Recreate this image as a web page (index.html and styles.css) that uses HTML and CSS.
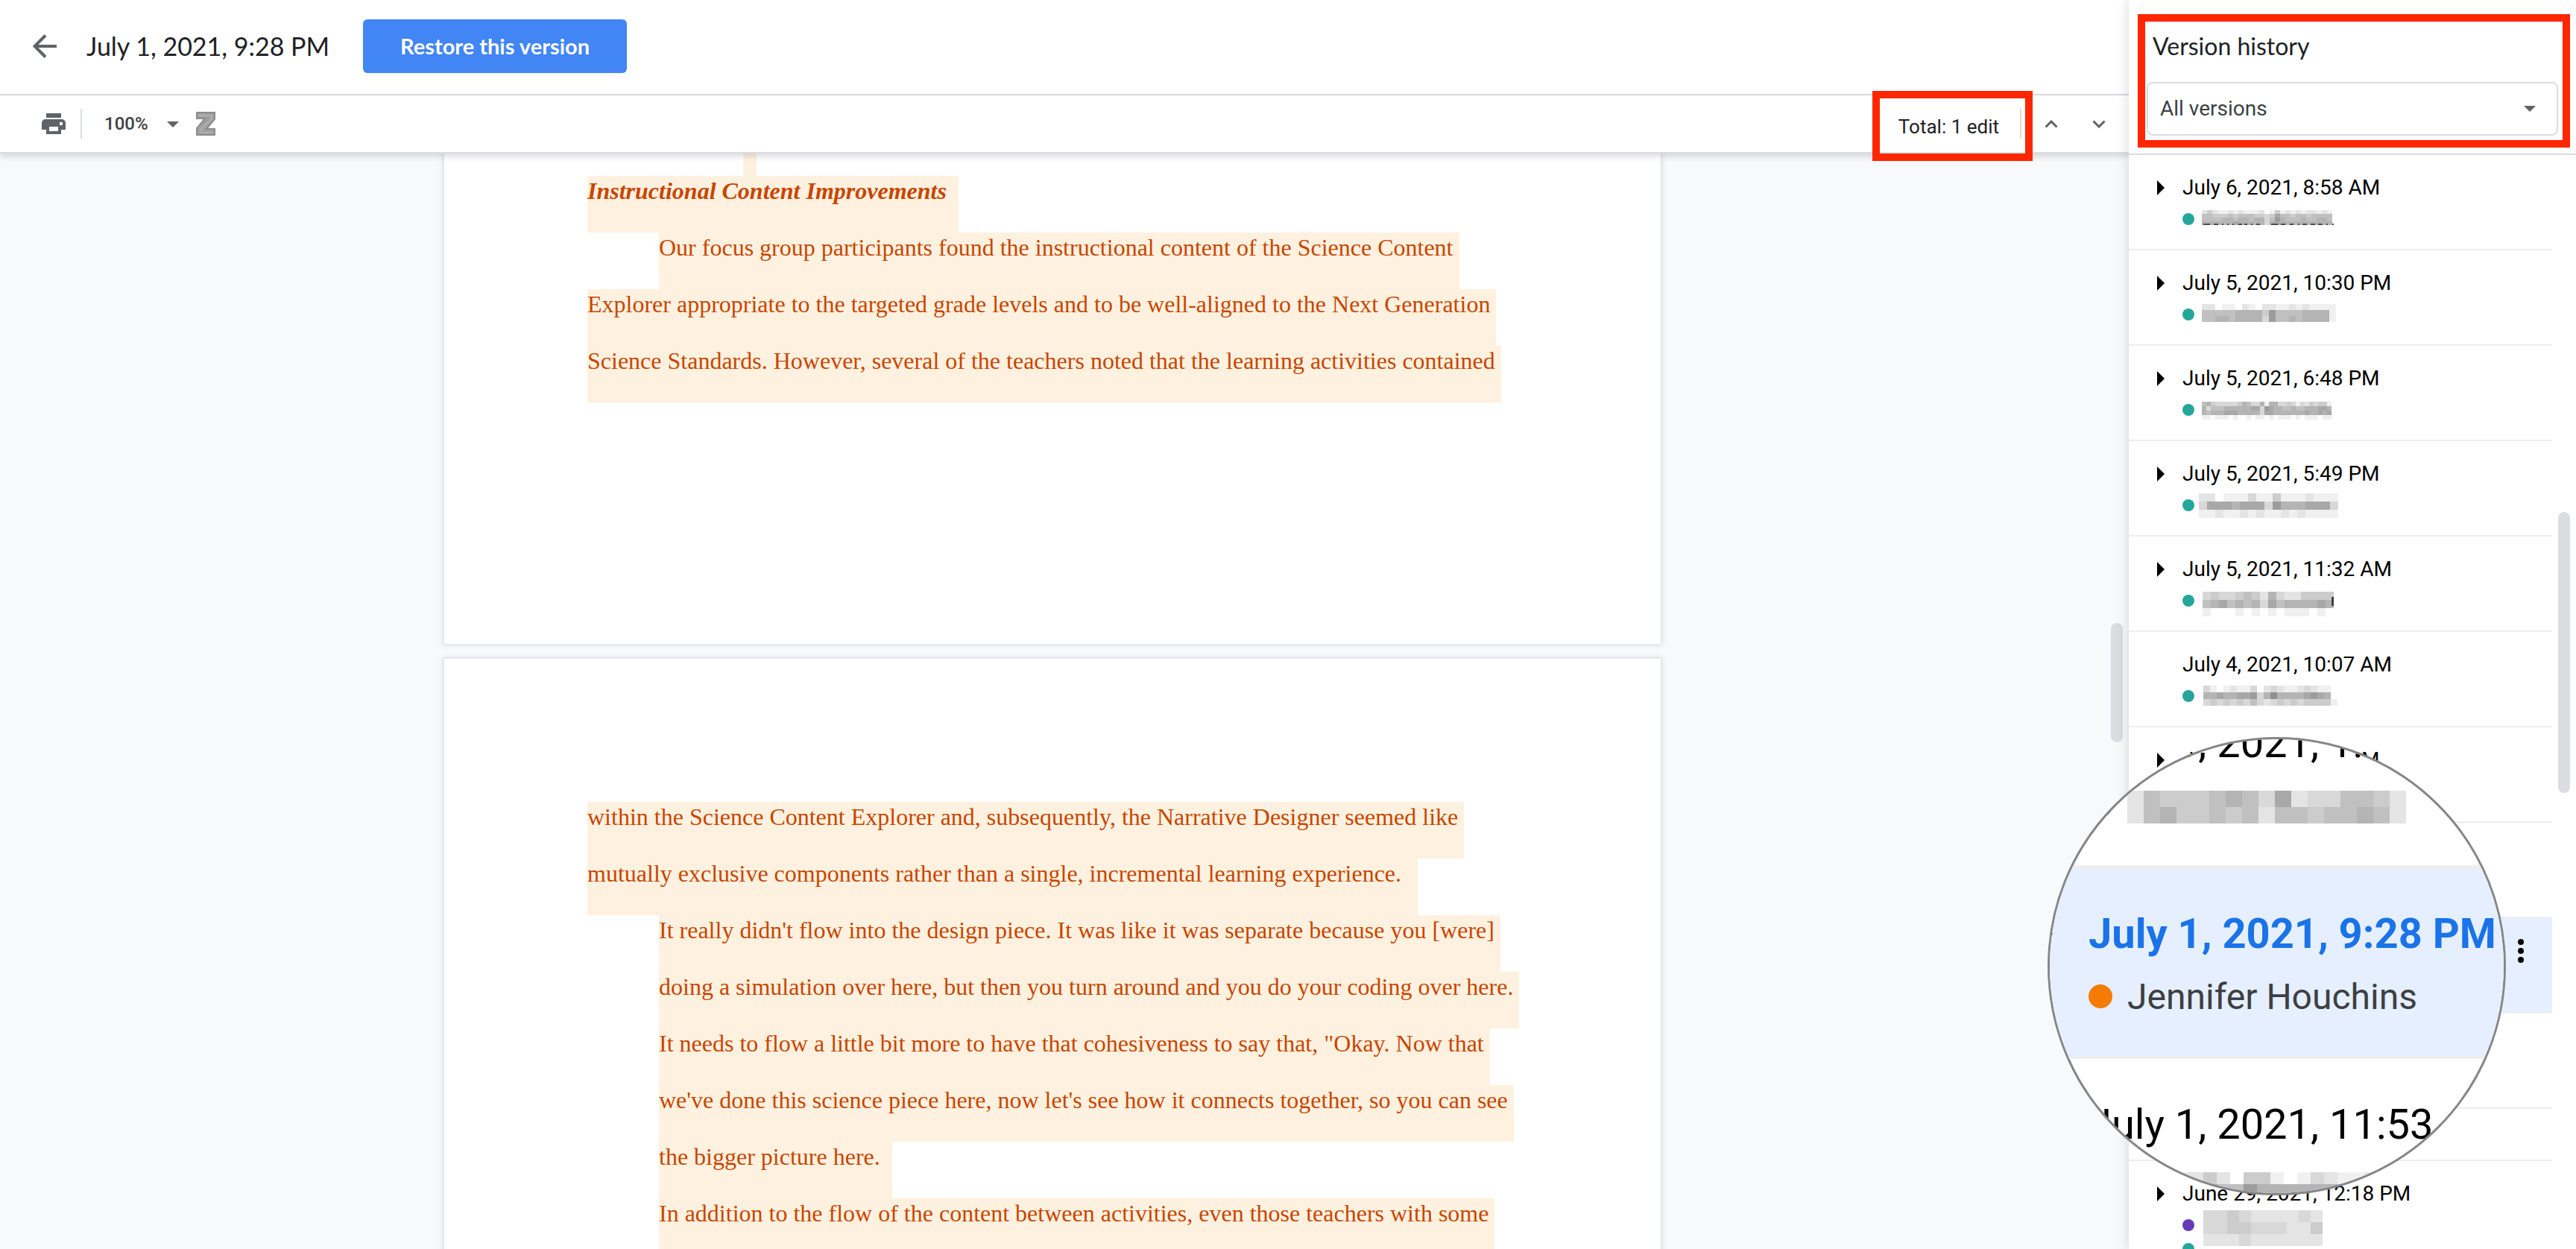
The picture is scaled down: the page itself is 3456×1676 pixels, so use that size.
FILE: index.html
```html
<!DOCTYPE html>
<html lang="en">
<head>
<meta charset="utf-8">
<title>Version history</title>
<link rel="stylesheet" href="styles.css">
</head>
<body>
<div class="app">
  <main class="main">
    <header class="header">
      <button class="icon-button back" aria-label="Back">
        <svg width="32" height="32" viewBox="0 0 32 32"><path d="M17 1.500 2.500 16 17 30.500M2.500 16H32" fill="none" stroke="#5f6368" stroke-width="4"/></svg>
      </button>
      <h1 class="title">July 1, 2021, 9:28 PM</h1>
      <button class="restore">Restore this version</button>
    </header>

    <div class="toolbar">
      <button class="icon-button print" aria-label="Print">
        <svg width="32" height="28" viewBox="0 0 32 28" fill="#5f6368"><path d="M6 0h20v6H6z"/><path fill-rule="evenodd" d="M5 8h22a5 5 0 0 1 5 5v9h-6v6H6v-6H0v-9a5 5 0 0 1 5-5zm5 10v6h12v-6zm14-6v4h4v-4z"/></svg>
      </button>
      <span class="divider"></span>
      <label class="zoom">
        <select class="zoom-select" aria-label="Zoom"><option>100%</option></select>
        <svg class="zoom-caret" width="16" height="8" viewBox="0 0 16 8"><path d="M0 0h16L8 8z" fill="#5f6368"/></svg>
      </label>
      <button class="icon-button addon" aria-label="Zotero">
        <svg width="26" height="32" viewBox="0 0 26 32"><path d="M1 1h24v9L14 23h11v8H1v-9L12 9H1z" fill="#a0a0a0" stroke="#8c8c8c" stroke-width="2"/><path d="M4 5h17v4L6 24v4h16" fill="none" stroke="#b0b0b0" stroke-width="2"/></svg>
      </button>
      <div class="edits">
        <span class="edits-total">Total: 1 edit</span>
        <span class="divider"></span>
      </div>
      <button class="icon-button step" aria-label="Previous edit">
        <svg width="18" height="11" viewBox="0 0 18 11"><path d="M1.500 9.500 9 2l7.500 7.500" fill="none" stroke="#5f6368" stroke-width="3"/></svg>
      </button>
      <button class="icon-button step" aria-label="Next edit">
        <svg width="18" height="11" viewBox="0 0 18 11"><path d="M1.500 1.500 9 9l7.500-7.500" fill="none" stroke="#5f6368" stroke-width="3"/></svg>
      </button>
    </div>

    <div class="viewport">
      <section class="page page-first">
        <div class="line-end"></div>
        <h2 class="line para-end heading">Instructional Content Improvements</h2>
        <div class="line indent">Our focus group participants found the instructional content of the Science Content</div>
        <div class="line">Explorer appropriate to the targeted grade levels and to be well-aligned to the Next Generation</div>
        <div class="line">Science Standards. However, several of the teachers noted that the learning activities contained</div>
      </section>
      <section class="page page-next">
        <div class="line">within the Science Content Explorer and, subsequently, the Narrative Designer seemed like</div>
        <div class="line para-end-space">mutually exclusive components rather than a single, incremental learning experience.</div>
        <div class="line indent">It really didn't flow into the design piece. It was like it was separate because you [were]</div>
        <div class="line indent">doing a simulation over here, but then you turn around and you do your coding over here.</div>
        <div class="line indent">It needs to flow a little bit more to have that cohesiveness to say that, "Okay. Now that</div>
        <div class="line indent">we've done this science piece here, now let's see how it connects together, so you can see</div>
        <div class="line indent para-end">the bigger picture here.</div>
        <div class="line indent">In addition to the flow of the content between activities, even those teachers with some</div>
      </section>
      <span class="thumb thumb-doc"></span>
    </div>
  </main>

  <aside class="sidebar">
    <div class="side-head">
      <h2 class="side-title">Version history</h2>
      <label class="filter">
        <select class="filter-select" aria-label="Filter versions"><option>All versions</option></select>
        <svg class="filter-caret" width="16" height="8" viewBox="0 0 16 8"><path d="M0 0h16L8 8z" fill="#5f6368"/></svg>
      </label>
    </div>
    <div class="versions">
      <ul class="list">
        <li class="row"><div class="date expandable">July 6, 2021, 8:58 AM</div><div class="author"><i class="dot teal"></i><svg class="mosaic" data-name="a"></svg></div></li>
        <li class="row"><div class="date expandable">July 5, 2021, 10:30 PM</div><div class="author"><i class="dot teal"></i><svg class="mosaic" data-name="b"></svg></div></li>
        <li class="row"><div class="date expandable">July 5, 2021, 6:48 PM</div><div class="author"><i class="dot teal"></i><svg class="mosaic" data-name="c"></svg></div></li>
        <li class="row"><div class="date expandable">July 5, 2021, 5:49 PM</div><div class="author"><i class="dot teal"></i><svg class="mosaic" data-name="d"></svg></div></li>
        <li class="row"><div class="date expandable">July 5, 2021, 11:32 AM</div><div class="author"><i class="dot teal"></i><svg class="mosaic" data-name="e"></svg></div></li>
        <li class="row"><div class="date">July 4, 2021, 10:07 AM</div><div class="author"><i class="dot teal"></i><svg class="mosaic" data-name="f"></svg></div></li>
        <li class="row"><div class="date expandable">July 1, 2021, 1:30 PM</div></li>
        <li class="row"></li>
        <li class="row selected">
          <button class="icon-button more" aria-label="More actions">
            <svg width="8" height="32" viewBox="0 0 8 32"><circle cx="4" cy="4" r="4"/><circle cx="4" cy="16" r="4"/><circle cx="4" cy="28" r="4"/></svg>
          </button>
        </li>
        <li class="row"></li>
        <li class="row short"></li>
        <li class="row"><div class="date expandable">June 29, 2021, 12:18 PM</div><div class="author"><i class="dot purple"></i><svg class="mosaic" data-name="g"></svg></div><div class="author"><i class="dot teal"></i></div></li>
      </ul>
      <span class="thumb thumb-side"></span>
    </div>
  </aside>

  <div class="lens">
    <ul class="list lens-list">
      <li class="row"><div class="date expandable">July 1, 2021, 1:30 PM</div><div class="author"><i class="dot teal"></i><svg class="mosaic" data-name="h"></svg></div></li>
      <li class="row selected"><div class="date expandable">July 1, 2021, 9:28 PM</div><div class="author"><i class="dot orange"></i>Jennifer Houchins</div></li>
      <li class="row"><div class="date">July 1, 2021, 11:53 AM</div><div class="author"><svg class="mosaic" data-name="i"></svg></div></li>
    </ul>
  </div>
</div>
<script src="script.js"></script>
</body>
</html>
```
FILE: styles.css
```css
* { box-sizing: border-box; }

body {
  margin: 0;
  font-family: Roboto, "Liberation Sans", sans-serif;
  color: #202124;
  background: #fff;
}

h1, h2, ul { margin: 0; padding: 0; font-weight: 400; }
ul { list-style: none; }

.app {
  position: relative;
  display: grid;
  grid-template-columns: minmax(0, 1fr) 600px;
  height: 100vh;
  overflow: hidden;
}

.icon-button {
  display: flex;
  align-items: center;
  justify-content: center;
  padding: 0;
  border: 0;
  background: none;
}

.main {
  display: flex;
  flex-direction: column;
  min-width: 0;
  min-height: 0;
}

/* header */
.header {
  display: flex;
  align-items: center;
  height: 128px;
  padding: 0 44px 2px;
  border-bottom: 2px solid #dadce0;
}
.title {
  margin: 0 45px 0 40px;
  font: 400 34px/44px Lato, Roboto, sans-serif;
  white-space: nowrap;
}
.restore {
  height: 72px;
  padding: 0 50px;
  border: 0;
  border-radius: 6px;
  background: #4285f4;
  color: #fff;
  font: 700 29px/36px Lato, Roboto, sans-serif;
}

/* toolbar */
.toolbar {
  position: relative;
  z-index: 1;
  display: flex;
  align-items: center;
  height: 78px;
  padding: 0 8px 0 56px;
  border-bottom: 2px solid #dadce0;
  background: #fff;
  box-shadow: 0 4px 8px rgba(0, 0, 0, 0.14);
}
.divider { width: 2px; height: 40px; background: #dadce0; }
.print { margin-right: 20px; }
.zoom { position: relative; width: 100px; margin-left: 30px; }
.zoom-select {
  width: 100%;
  padding: 0;
  border: 0;
  background: none;
  appearance: none;
  color: #3c4043;
  font: 500 24px/32px Roboto, sans-serif;
}
.zoom-caret { position: absolute; right: 0; top: 13px; }
.addon { margin-left: 23px; }
.edits {
  position: relative;
  display: flex;
  align-items: center;
  align-self: stretch;
  gap: 28px;
  margin-left: auto;
  margin-right: 8px;
}
.edits-total { padding-top: 8px; font-size: 26px; line-height: 32px; }
.edits::after {
  content: "";
  position: absolute;
  inset: -6px -15px -12px -35px;
  border: 10px solid #ff2600;
}
.step { width: 64px; height: 64px; }

/* document */
.viewport {
  position: relative;
  flex: 1;
  min-height: 0;
  padding-right: 32px;
  overflow: hidden;
  background: #f8f9fb;
}
.page {
  max-width: 1632px;
  margin: 0 auto 20px;
  padding: 0 192px;
  background: #fff;
  box-shadow: 0 0 6px 2px rgba(60, 64, 67, 0.15);
  color: #c84600;
  font: 32px/40px "Liberation Serif", serif;
}
.page-first { padding-bottom: 324px; }
.page-next { padding-top: 192px; padding-bottom: 192px; }
.line {
  width: fit-content;
  padding: 0 8px 36px 0;
  background: #fff1df;
  white-space: nowrap;
}
.line-end { width: 18px; height: 30px; margin-left: 209px; background: #fff1df; }
.heading { font: italic 700 32px/40px "Liberation Serif", serif; }
.indent { margin-left: 96px; }
.para-end { padding-right: 16px; }
.para-end-space { padding-right: 22px; }

.thumb { position: absolute; right: 8px; width: 16px; border-radius: 8px; background: #dadce0; }
.thumb-doc { top: 630px; height: 160px; }
.thumb-side { top: 479px; height: 377px; }

/* sidebar */
.sidebar {
  position: relative;
  z-index: 2;
  display: flex;
  flex-direction: column;
  min-height: 0;
  background: #fff;
  box-shadow: 0 0 16px rgba(0, 0, 0, 0.16);
}
.side-head {
  position: relative;
  height: 208px;
  padding: 40px 24px 24px;
  border-bottom: 2px solid #dadce0;
}
.side-head::after {
  content: "";
  position: absolute;
  inset: 19px 8px 8px 12px;
  border: 10px solid #ff2600;
  pointer-events: none;
}
.side-title { padding-left: 8px; font: 400 32px/44px Lato, Roboto, sans-serif; }
.filter { position: relative; display: block; margin-top: 26px; }
.filter-select {
  width: 100%;
  height: 72px;
  padding: 0 16px;
  border: 2px solid #dadce0;
  border-radius: 8px;
  background: #fff;
  appearance: none;
  color: #3c4043;
  font: 28px/36px Roboto, sans-serif;
}
.filter-caret { position: absolute; right: 30px; top: 32px; }
.versions { position: relative; flex: 1; min-height: 0; overflow: hidden; }

/* version rows; --s is the magnification */
.list { --s: 1px; padding-right: 32px; }
.row {
  position: relative;
  min-height: calc(128 * var(--s));
  padding: calc(28 * var(--s)) 0 0 calc(72 * var(--s));
  border-bottom: calc(2 * var(--s)) solid #eee;
}
.date {
  position: relative;
  color: #000;
  font-size: calc(28 * var(--s));
  line-height: calc(32 * var(--s));
  margin-bottom: calc(12 * var(--s));
  white-space: nowrap;
}
.expandable::before {
  content: "";
  position: absolute;
  left: calc(-34 * var(--s));
  top: calc(6 * var(--s));
  border-left: calc(10 * var(--s)) solid #000;
  border-top: calc(10 * var(--s)) solid transparent;
  border-bottom: calc(10 * var(--s)) solid transparent;
}
.author {
  display: flex;
  align-items: center;
  gap: calc(10 * var(--s));
  height: calc(28 * var(--s));
  margin-bottom: calc(4 * var(--s));
  color: #3c4043;
  font-size: calc(24 * var(--s));
  white-space: nowrap;
}
.dot { width: calc(16 * var(--s)); height: calc(16 * var(--s)); border-radius: 50%; }
.teal { background: #26a69a; }
.purple { background: #673ab7; }
.orange { background: #f57c00; }
.mosaic { width: 200px; height: 100%; overflow: visible; shape-rendering: crispEdges; }
.selected { background: #e6efff; }
.selected .date { color: #1a73e8; font-weight: 700; }
.short { min-height: 70px; padding: 0; }
.more { width: 32px; height: 32px; margin: 0 26px 0 auto; }

/* magnifying lens laid over the list */
.lens {
  position: absolute;
  z-index: 3;
  right: 94px;
  top: 989px;
  width: 615px;
  height: 615px;
  overflow: hidden;
  border: 3px solid #868686;
  border-radius: 50%;
  background: #fff;
}
.lens-list {
  --s: 2px;
  margin: -83px 0 0 -92px;
  padding: 0;
}
```
FILE: script.js
```js
// Redacted author names: each digit is one cell, 0 = white, 9 = darkest.
const mosaics = {
  a: { x: 0, y: 2, w: 7, h: 5, rows: ["24211212111201412121221210", "55444545554434755455455550", "55556656656635865556556650", "66666676666636766666666660"],
       marks: [[2, 9], [16, 6], [27, 2], [34, 2], [41, 2], [49, 5], [57, 4], [66, 2], [73, 5], [93, 9], [106, 6], [118, 5], [129, 2], [135, 6], [146, 6], [156, 6], [167, 2], [175, 2]] },
  b: { x: 0, y: 0, w: 9, h: 8, rows: ["22011021022112121111", "55555666648555566661", "55665666638556566661"] },
  c: { x: 0, y: 3, w: 6, h: 6, rows: ["564333334653361663343132434410", "635556666667738766556556667760", "656667776666637766666667667670", "110111010010110101110101110110"] },
  d: { x: -4, y: -2, w: 11, h: 11, rows: ["22011131141112111", "37776777386667773", "11211212112121111"] },
  e: { x: 1, y: 2, w: 11, h: 11, rows: ["3433454263224444", "5675656375666676", "1000101010111010"], edge: true },
  f: { x: 2, y: 0, w: 9, h: 9, rows: ["31012113023211232110", "66766778369666678760", "34343435323434344441"] },
  g: { x: 2, y: -6, w: 16, h: 16, rows: ["33432222320", "33443332240", "22232222220"] },
  h: { x: 0, y: 8, w: 22, h: 22, rows: ["25444565372335542", "25644545255455652"] },
  i: { x: 64, y: 8, w: 18, h: 16, rows: ["112224204410132112", "666668558666666666", "666668558666666666"] },
};

const shade = level => {
  const v = Math.round(252 - level * 12);
  return `rgb(${v},${v},${v + 1})`;
};

document.querySelectorAll(".mosaic").forEach(svg => {
  const m = mosaics[svg.dataset.name];
  const rect = (x, y, w, h, fill) => {
    const r = document.createElementNS("http://www.w3.org/2000/svg", "rect");
    r.setAttribute("x", x);
    r.setAttribute("y", y);
    r.setAttribute("width", w);
    r.setAttribute("height", h);
    r.setAttribute("fill", fill);
    svg.appendChild(r);
  };
  m.rows.forEach((row, j) => [...row].forEach((c, i) => {
    if (c !== "0") rect(m.x + i * m.w, m.y + j * m.h, m.w, m.h, shade(+c));
  }));
  (m.marks || []).forEach(([x, w]) => rect(x, 20, w, 2, "#4a4d50"));
  if (m.edge) rect(174, 9, 3, 12, "#3c4043");
});
```
